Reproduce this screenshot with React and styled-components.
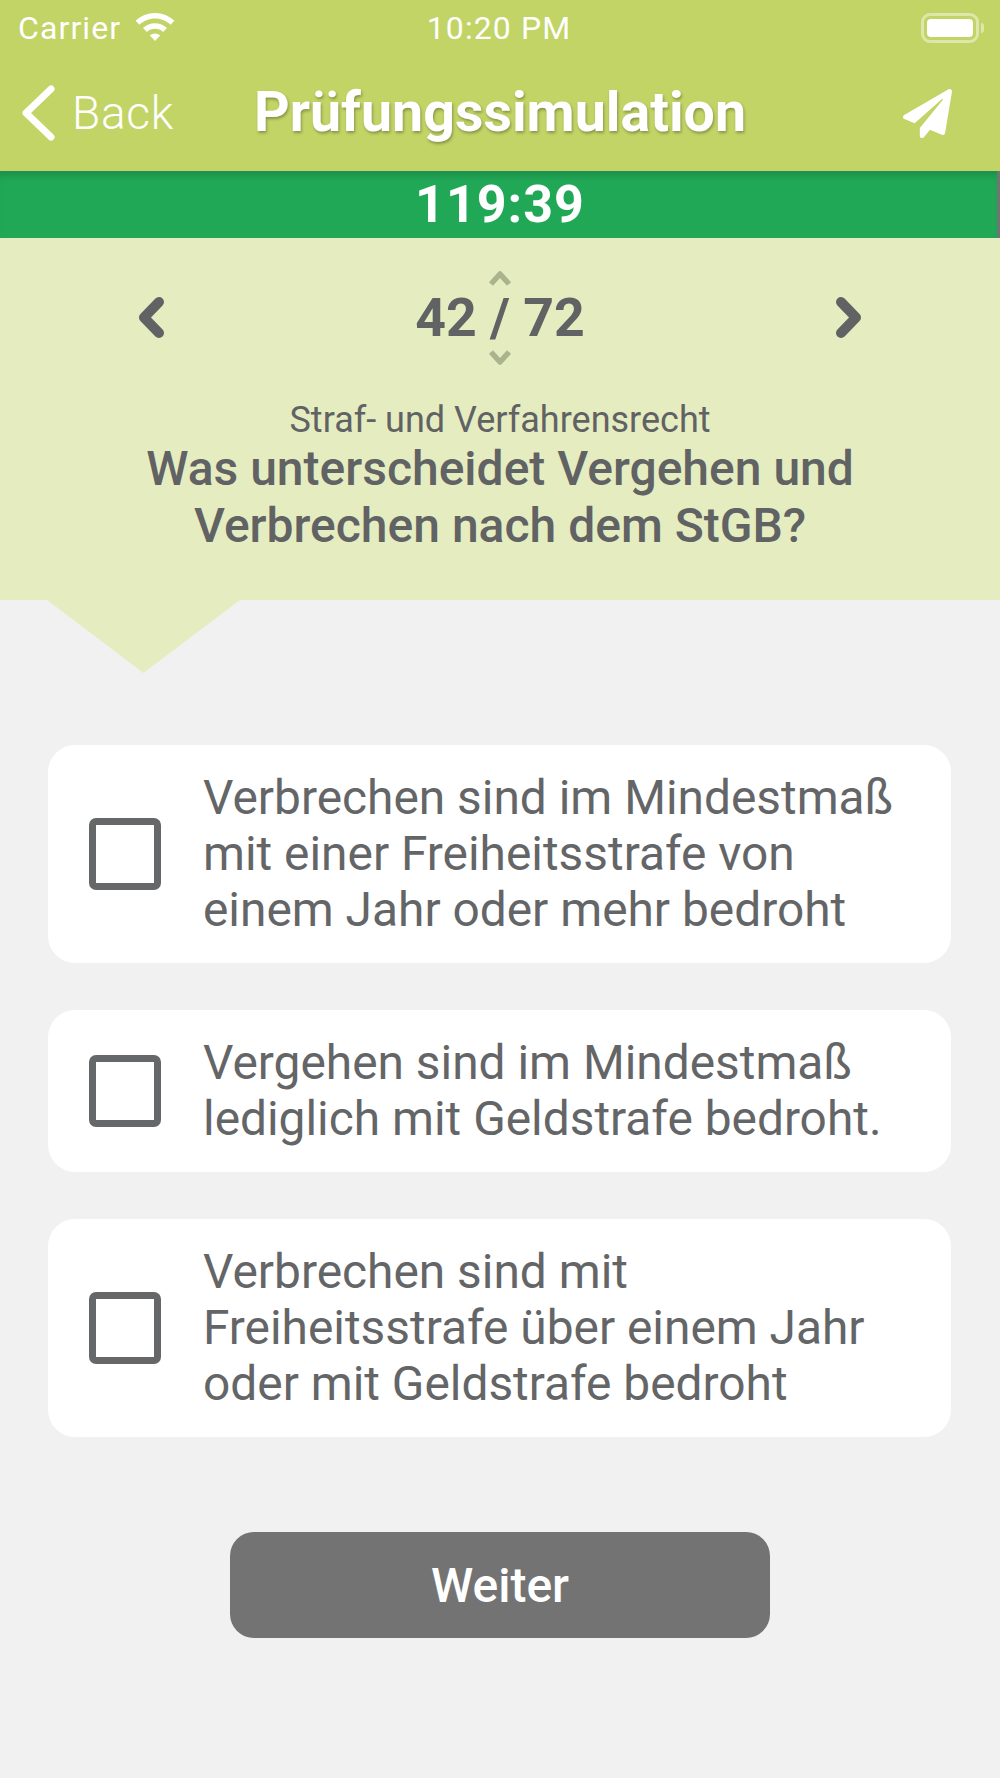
import React from "react";
import styled, { createGlobalStyle } from "styled-components";
import { FaPaperPlane } from "react-icons/fa";

const Global = createGlobalStyle`
  html, body { margin: 0; padding: 0; background: #f1f1f1; }
  * { box-sizing: border-box; }
  body { font-family: Roboto, "Liberation Sans", sans-serif; }
`;

const Page = styled.div`
  width: 1000px;
  height: 1778px;
  overflow: hidden;
  display: flex;
  flex-direction: column;
  background: #f1f1f1;
`;

const Header = styled.header`
  height: 171px;
  background: #c1d465;
  color: #fff;
  display: flex;
  flex-direction: column;
`;

const StatusBar = styled.div`
  height: 57px;
  display: grid;
  grid-template-columns: 1fr auto 1fr;
  align-items: center;
  padding: 0 20px 2px 18px;
  font-size: 32px;
  letter-spacing: 1.1px;
`;

const StatusLeft = styled.div`
  display: flex;
  align-items: center;
  gap: 14px;
`;

const Battery = styled.div`
  justify-self: end;
  width: 58px;
  height: 30px;
  border: 3px solid rgba(255, 255, 255, 0.45);
  border-radius: 9px;
  padding: 3px;
  margin-right: 1px;
  position: relative;
  &::before {
    content: "";
    display: block;
    height: 100%;
    background: #fff;
    border-radius: 4px;
  }
  &::after {
    content: "";
    position: absolute;
    right: -8px;
    top: 7px;
    width: 3px;
    height: 10px;
    border-radius: 0 3px 3px 0;
    background: rgba(255, 255, 255, 0.45);
  }
`;

const NavBar = styled.div`
  flex: 1;
  display: grid;
  grid-template-columns: 1fr auto 1fr;
  align-items: center;
  padding: 0 20px;
  margin-bottom: 2px;
`;

const BackLink = styled.div`
  display: flex;
  align-items: center;
  gap: 16px;
  font-size: 46px;
  font-weight: 300;
  letter-spacing: 0.7px;
`;

const Title = styled.h1`
  margin: 0;
  font-size: 55.5px;
  font-weight: 700;
  line-height: 1;
  text-shadow: 1px 2px 3px rgba(0, 0, 0, 0.3);
`;

const SendButton = styled.div`
  justify-self: end;
  display: flex;
  font-size: 49px;
  padding-right: 28px;
`;

const Timer = styled.div`
  height: 67px;
  background: #20a857;
  border-right: 3px solid #6f7672;
  box-shadow: inset 0 10px 8px -6px rgba(0, 0, 0, 0.16);
  color: #fff;
  font-size: 52px;
  font-weight: 700;
  letter-spacing: 1px;
  padding-left: 3px;
  display: flex;
  align-items: center;
  justify-content: center;
`;

const QuestionPanel = styled.section`
  height: 362px;
  background: #e5edc0;
  color: #616264;
  text-align: center;
  position: relative;
  padding-top: 32px;
  &::after {
    content: "";
    position: absolute;
    left: 47px;
    top: 100%;
    width: 193px;
    height: 73px;
    background: #e5edc0;
    clip-path: polygon(0 0, 100% 0, 50% 100%);
  }
`;

const Pager = styled.div`
  display: flex;
  align-items: center;
  justify-content: space-between;
  padding: 0 137px;
  height: 95px;
`;

const Counter = styled.div`
  display: flex;
  flex-direction: column;
  align-items: center;
  font-size: 53.6px;
  font-weight: 700;
  line-height: 62px;
`;

const SmallArrow = styled.svg`
  display: block;
  width: 24px;
  height: 17px;
  fill: none;
  stroke: #a9b48d;
  stroke-width: 5.5;
  stroke-linejoin: round;
`;

const PagerChevron = styled.svg`
  display: block;
  width: 28px;
  height: 41px;
  fill: none;
  stroke: #616264;
  stroke-width: 10;
  stroke-linecap: round;
  stroke-linejoin: round;
`;

const Category = styled.div`
  font-size: 36px;
  line-height: 40px;
  margin-top: 35px;
`;

const Question = styled.h2`
  margin: 0;
  font-size: 48px;
  font-weight: 500;
  line-height: 57px;
`;

const AnswerList = styled.div`
  display: flex;
  flex-direction: column;
  gap: 47px;
  padding: 145px 49px 0 48px;
`;

const Card = styled.div`
  background: #fff;
  border-radius: 27px;
  display: flex;
  align-items: center;
  gap: 42px;
  padding: 25px 20px 25px 41px;
  color: #646567;
  font-size: 47.85px;
  line-height: 56px;
  white-space: nowrap;
`;

const Box = styled.div`
  flex: none;
  width: 72px;
  height: 72px;
  border: 7.5px solid #666769;
  border-radius: 7px;
`;

const Footer = styled.div`
  display: flex;
  justify-content: center;
  padding-top: 95px;
`;

const NextButton = styled.button`
  width: 540px;
  height: 106px;
  border: 0;
  border-radius: 24px;
  background: #737373;
  color: #fff;
  font-family: inherit;
  font-size: 48px;
  font-weight: 500;
`;

const Wifi = () => (
  <svg width="40" height="29" viewBox="0 0 40 29" fill="#fff">
    <path d="M20 0C12.5 0 5.7 3 .6 7.8l3.8 4C8.5 8 14 5.6 20 5.6S31.5 8 35.6 11.8l3.8-4C34.3 3 27.5 0 20 0z" />
    <path d="M20 10.2c-4.6 0-8.8 1.8-12 4.7l3.9 4.1c2.1-2 5-3.2 8.1-3.2s6 1.2 8.1 3.2l3.9-4.1c-3.2-2.9-7.4-4.7-12-4.7z" />
    <path d="M20 20.4c-2 0-3.9.8-5.2 2L20 28l5.2-5.6c-1.3-1.2-3.2-2-5.2-2z" />
  </svg>
);

const BackChevron = () => (
  <svg width="36" height="56" viewBox="0 0 36 56" fill="none" stroke="#fff" strokeWidth="7" strokeLinecap="round" strokeLinejoin="round">
    <path d="M31 4 6 28l25 24" />
  </svg>
);

const answers = [
  ["Verbrechen sind im Mindestmaß", "mit einer Freiheitsstrafe von", "einem Jahr oder mehr bedroht"],
  ["Vergehen sind im Mindestmaß", "lediglich mit Geldstrafe bedroht."],
  ["Verbrechen sind mit", "Freiheitsstrafe über einem Jahr", "oder mit Geldstrafe bedroht"],
];

export default function App() {
  return (
    <Page>
      <Global />
      <Header>
        <StatusBar>
          <StatusLeft>
            Carrier
            <Wifi />
          </StatusLeft>
          <div>10:20 PM</div>
          <Battery />
        </StatusBar>
        <NavBar>
          <BackLink>
            <BackChevron />
            Back
          </BackLink>
          <Title>Prüfungssimulation</Title>
          <SendButton>
            <FaPaperPlane />
          </SendButton>
        </NavBar>
      </Header>
      <Timer>119:39</Timer>
      <QuestionPanel>
        <Pager>
          <PagerChevron viewBox="0 0 28 41"><path d="M22 5 7 20.5 22 36" /></PagerChevron>
          <Counter>
            <SmallArrow viewBox="0 0 24 17"><path d="M3 14 12 4l9 10" /></SmallArrow>
            42 / 72
            <SmallArrow viewBox="0 0 24 17"><path d="M3 3l9 10 9-10" /></SmallArrow>
          </Counter>
          <PagerChevron viewBox="0 0 28 41"><path d="M6 5l15 15.5L6 36" /></PagerChevron>
        </Pager>
        <Category>Straf- und Verfahrensrecht</Category>
        <Question>
          Was unterscheidet Vergehen und
          <br />
          Verbrechen nach dem StGB?
        </Question>
      </QuestionPanel>
      <AnswerList>
        {answers.map((lines, i) => (
          <Card key={i}>
            <Box />
            <div>
              {lines.map((l, j) => (
                <div key={j}>{l}</div>
              ))}
            </div>
          </Card>
        ))}
      </AnswerList>
      <Footer>
        <NextButton>Weiter</NextButton>
      </Footer>
    </Page>
  );
}
